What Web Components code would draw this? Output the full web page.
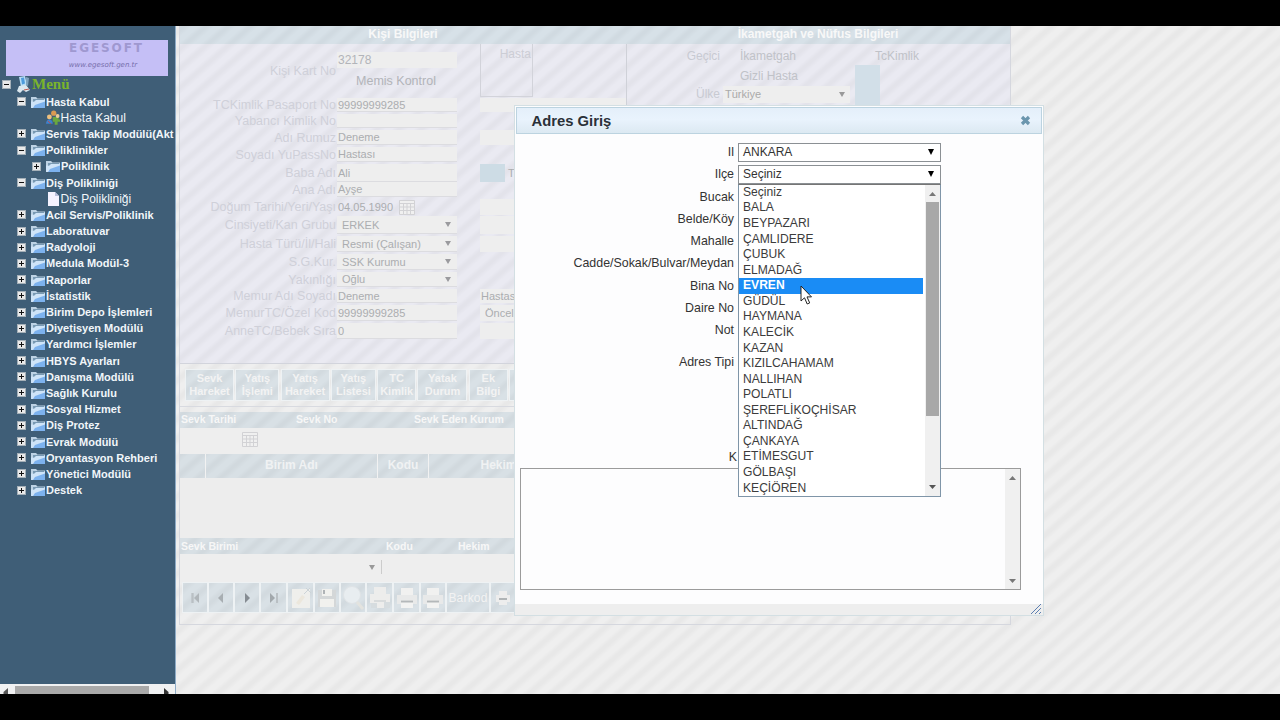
<!DOCTYPE html>
<html lang="tr">
<head>
<meta charset="utf-8">
<title>Adres Giriş</title>
<style>
  body {
    margin: 0;
    width: 1280px;
    height: 720px;
    overflow: hidden;
    background: #000;
    font-family: "Liberation Sans", Arial, sans-serif;
    --stripes: repeating-linear-gradient(139deg, rgba(0,0,0,0) 0 4px, rgba(0,0,0,.03) 8px 10px, rgba(0,0,0,0) 14.6px);
  }
</style>
</head>
<body>
<hbys-app></hbys-app>

<script>
function define(name, html, setup) {
  const template = document.createElement('template');
  template.innerHTML = html;

  customElements.define(name, class extends HTMLElement {
    connectedCallback() {
      if (this.shadowRoot) return;
      const root = this.attachShadow({ mode: 'open' });
      root.appendChild(template.content.cloneNode(true));
      if (setup) setup(this, root);
    }
  });
}

const icons = {
  folder: `<svg width="16" height="14" viewBox="0 0 16 14"><path d="M1 2h5l1.500 1.500H15V13H1z" fill="#bdd2e4"/><path d="M3 4h11v3H3z" fill="#7899b3"/><path d="M1 13V6.500l3 .2L6 5h9v8z" fill="#cfe4f8"/><path d="M5 10l10-3.500V13H3z" fill="#7db2ee"/></svg>`,
  page: `<svg width="14" height="14" viewBox="0 0 14 14"><path d="M2 0h7l4 4v10H2z" fill="#f4f2ff"/><path d="M9 0v4h4z" fill="#b9bedb"/></svg>`,
  people: `<svg width="15" height="15" viewBox="0 0 15 15"><circle cx="8" cy="3" r="2.700" fill="#d99a52"/><circle cx="3.500" cy="7" r="2.500" fill="#eec07e"/><path d="M0 14c0-6 7-6 7 0z" fill="#3c82cf"/><path d="M7 7h6v2.500h1.500V12H12v3H9v-3H7z" fill="#69a83f"/><circle cx="12" cy="6" r="2" fill="#e9cb9a"/><path d="M2 11l3 3" stroke="#d04a3a"/></svg>`,
  root: `<svg width="14" height="17" viewBox="0 0 14 17"><path d="M2 1l6-1 2 9-6 2z" fill="#b8ddf5"/><path d="M4 2l3-.5 1 6-3 1z" fill="#4e9bdc"/><path d="M9 1l3 1-1 8-2-1z" fill="#7fa3bd"/><path d="M0 15l2-5 7-1 4 5-4 2-3-2-3 3z" fill="#dce8ef"/><path d="M7 14l5-1" stroke="#c4574d"/></svg>`,
  calendar: `<svg width="17" height="16" viewBox="0 0 17 16"><path d="M.5 1.500h15v14H.5zM1 4.500h14M1 8h14M1 11.500h14M4.500 4v11M8 4v11M11.500 4v11" fill="#f0f0f0" stroke="#d2d2d5"/></svg>`,
  first: `<svg width="12" height="12"><path d="M3 1v10M4 1v10" stroke="#b0b6ba"/><path d="M10 1v10L5 6z" fill="#b0b6ba"/></svg>`,
  prev: `<svg width="12" height="12"><path d="M8 1v10L3 6z" fill="#a8aeb2"/></svg>`,
  next: `<svg width="12" height="12"><path d="M4 1v10l5-5z" fill="#868c92"/></svg>`,
  last: `<svg width="12" height="12"><path d="M2 1v10l5-5z" fill="#a2a8ac"/><path d="M9 1v10" stroke="#b0b6ba" stroke-width="1.500"/></svg>`,
  add: `<svg width="24" height="26"><path d="M3 4h18v19H3z" fill="#efefec"/><path d="M7 18l6-8 3 2-6 8z" fill="#ece7dc"/><path d="M17 3l5 5M15 9l6-6" stroke="#ccd3d7"/></svg>`,
  save: `<svg width="22" height="24"><path d="M2 4h18v17H2z" fill="#d4d7d8"/><path d="M6 3h10v7H6zM4 13h14v8H4z" fill="#f1f1ee"/><path d="M8 4v4" stroke="#afb3b6" stroke-width="2"/></svg>`,
  search: `<svg width="24" height="26"><circle cx="11" cy="10" r="8.500" fill="#e8edf0" stroke="#dfe3e6"/><path d="M16 17l6 7" stroke="#e3e3df" stroke-width="3"/></svg>`,
  print: `<svg width="22" height="24"><path d="M5 2h12v8H5z" fill="#f1f1f0"/><path d="M1 9h20v9H1z" fill="#e8e9e9"/><path d="M5 14h12v8H5z" fill="#f3f3f2"/><path d="M5 15.500h12" stroke="#b4b8ba" stroke-width="2"/></svg>`,
  smallPrint: `<svg width="16" height="16"><path d="M4 1h8v5H4zM1 5h14v7H1zM4 10h8v5H4z" fill="#ededed"/><path d="M4 9h8" stroke="#b0b4b6" stroke-width="2"/></svg>`,
  tools: `<svg width="24" height="26"><path d="M6 2h12v8H6zM2 9h20v9H2zM6 16h13v7H6z" fill="#ededec"/><path d="M3 18h6v5H3zM16 17h6v6h-6z" fill="#d6dcdf"/><path d="M6 16h12" stroke="#c3c9cc"/></svg>`
};

/* ---------- sidebar ---------- */

define('tree-item', `
<style>
  :host { display: flex; align-items: center; height: 16.2px; white-space: nowrap; color: #f1f6fa; font-size: 11px; font-weight: bold; }
  :host([level="1"]) { padding-left: 17px; }
  :host([level="2"]) { padding-left: 32px; }
  :host([leaf]) { padding-left: 46px; font-size: 12px; font-weight: normal; }
  :host([icon="root"]) { padding-left: 2px; color: #7bb42c; height: 17.500px; font: bold 15px "Liberation Serif", serif; }
  .box { box-sizing: border-box; width: 9px; height: 9px; margin-right: 3px; background: #e9e9e9; border: 1px solid #a5b0b8; position: relative; flex: none; }
  .box::before, .box.plus::after { content: ""; position: absolute; left: 1px; top: 3px; width: 5px; height: 1px; background: #111; }
  .box.plus::after { left: 3px; top: 1px; width: 1px; height: 5px; }
  :host([leaf]) .box { display: none; }
  .icon { display: flex; width: 17px; justify-content: center; flex: none; }
  :host([leaf]) .icon { width: 14.500px; }
  :host([icon="root"]) .icon { margin-left: 1px; }
</style>
<span class="box"></span><span class="icon"></span><slot></slot>
`, (el, root) => {
  root.querySelector('.icon').innerHTML = icons[el.getAttribute('icon') || 'folder'];
  if (!el.hasAttribute('open')) root.querySelector('.box').classList.add('plus');
});

define('side-menu', `
<style>
  :host { display: flex; flex-direction: column; width: 175px; flex: none; overflow: hidden; background: #3f5e77; border-right: 1px solid #8eabc6; }
  .logo { box-sizing: border-box; width: 162px; height: 36px; margin: 14px 0 0 6px; padding-left: 44px; background: #c5bff6; text-align: center; display: flex; flex-direction: column; }
  .logo b { font: bold 12px/17px "DejaVu Sans", sans-serif; letter-spacing: 1.900px; color: #9f98d0; padding-right: 5px; }
  .logo span { font: italic 7px/11px "DejaVu Sans", sans-serif; margin-top: 3px; padding-right: 12px; color: #766eab; }
  .tree { flex: 1; }
  .bar { display: flex; align-items: flex-start; height: 10px; background: #f0f1f2; }
  .bar i { flex: 1; height: 8px; margin-top: 2px; background: #a9a9a9; }
  .bar svg { margin-top: 4px; }
</style>
<div class="logo"><b>EGESOFT</b><span>www.egesoft.gen.tr</span></div>
<div class="tree">
  <tree-item icon="root" open>Menü</tree-item>
  <tree-item level="1" open>Hasta Kabul</tree-item>
  <tree-item leaf icon="people">Hasta Kabul</tree-item>
  <tree-item level="1">Servis Takip Modülü(Akt</tree-item>
  <tree-item level="1" open>Poliklinikler</tree-item>
  <tree-item level="2">Poliklinik</tree-item>
  <tree-item level="1" open>Diş Polikliniği</tree-item>
  <tree-item leaf icon="page">Diş Polikliniği</tree-item>
  <tree-item level="1">Acil Servis/Poliklinik</tree-item>
  <tree-item level="1">Laboratuvar</tree-item>
  <tree-item level="1">Radyoloji</tree-item>
  <tree-item level="1">Medula Modül-3</tree-item>
  <tree-item level="1">Raporlar</tree-item>
  <tree-item level="1">İstatistik</tree-item>
  <tree-item level="1">Birim Depo İşlemleri</tree-item>
  <tree-item level="1">Diyetisyen Modülü</tree-item>
  <tree-item level="1">Yardımcı İşlemler</tree-item>
  <tree-item level="1">HBYS Ayarları</tree-item>
  <tree-item level="1">Danışma Modülü</tree-item>
  <tree-item level="1">Sağlık Kurulu</tree-item>
  <tree-item level="1">Sosyal Hizmet</tree-item>
  <tree-item level="1">Diş Protez</tree-item>
  <tree-item level="1">Evrak Modülü</tree-item>
  <tree-item level="1">Oryantasyon Rehberi</tree-item>
  <tree-item level="1">Yönetici Modülü</tree-item>
  <tree-item level="1">Destek</tree-item>
</div>
<div class="bar"><svg width="15" height="6"><path d="M8 0v6H3.500V4z" fill="#555"/></svg><i></i><svg width="26" height="6"><path d="M15 0v6h4.500V4z" fill="#333"/></svg></div>
`);

/* ---------- patient card behind the dialog ---------- */

define('card-row', `
<style>
  :host { display: grid; grid-template-columns: 157px 120px 23px 1fr; align-items: stretch; height: var(--h, 17px); font-size: 11px; color: #abadb0; white-space: nowrap; }
  .label { align-self: center; justify-self: end; padding-right: 1px; font-size: 12.5px; color: #cfd0d9; }
  .field { display: flex; align-items: center; margin: 1px 0; padding-left: 1px; background: #eee; border-bottom: 1px solid #dcdce0; }
  :host([select]) .field { padding-left: 5px; }
  :host([select]) .field::after { content: ""; margin-left: auto; margin-right: 6px; border: 3.500px solid transparent; border-width: 5px 3.500px 0; border-top-color: #9a9a9e; }
  .third { grid-column: 4; display: flex; align-items: center; margin: 1px 0; }
  :host([third]) .third { background: #eee; }
  .cal { display: none; margin-left: 6px; }
  :host([calendar]) .field { background: none; border: 0; }
  :host([calendar]) .cal { display: flex; }
</style>
<span class="label"></span><span class="field"><slot></slot><span class="cal">${icons.calendar}</span></span><span class="third"><slot name="third"></slot></span>
`, (el, root) => {
  root.querySelector('.label').textContent = el.getAttribute('label');
  el.style.setProperty('--h', el.getAttribute('h') + 'px');
});

define('patient-form', `
<style>
  :host { display: grid; grid-template-columns: 446px 1fr; grid-template-rows: 18px 319px; background: var(--stripes) fixed, #eaeaf2; border-bottom: 1px solid #d2d4dc; }
  h2 { margin: 0; font-size: 12px; line-height: 16px; text-align: center; color: #f8f8f8; background: var(--stripes) fixed, #d7e1e8; }
  .right { border-left: 1px solid #cfd1d8; display: grid; grid-template-columns: 113px 118px 1fr; grid-template-rows: 23px 17px 20px; font-size: 12px; color: #c0c2c8; align-items: center; box-sizing: border-box; }
  .top { display: grid; grid-template-columns: 157px 120px 23px 53px; height: 53px; color: #b2b4b9; font-size: 12.5px; }
  .top label { align-self: center; justify-self: end; padding-right: 1px; color: #cfd0d9; }
  .top p { margin: 8px 0 0; padding-left: 1px; height: 16px; line-height: 16px; background: #eee; font-size: 12px; }
  .top p + p { margin-top: 5px; padding: 0 2px 0 0; text-align: center; background: none; font-size: 12.5px; }
  .hasta { grid-column: 4; border: 1px solid #d2d3da; border-top: 0; text-align: right; color: #cccdd5; font-size: 12px; line-height: 20px; padding-right: 1px; box-sizing: border-box; }
  .sq { width: 25px; height: 18px; background: #cddce5; margin-right: 3px; }
  .ulke { display: flex; justify-content: space-between; align-items: center; width: 127px; box-sizing: border-box; margin-left: -17px; background: #eee; color: #aaa; font-size: 11px; height: 17px; padding: 0 5px 0 2px; }
  .ulke i { border: 3.500px solid transparent; border-width: 5px 3.500px 0; border-top-color: #999; }
  .right > .r { justify-self: end; padding-right: 20px; color: #c8cad2; }
  .blue { width: 25px; height: 42px; background: #d2dfe8; grid-row: 2 / 4; grid-column: 3; align-self: start; margin: -2px 0 0 -3px; }
</style>
<h2>Kişi Bilgileri</h2><h2>İkametgah ve Nüfus Bilgileri</h2>
<div>
  <div class="top"><label>Kişi Kart No</label><div><p>32178</p><p>Memis Kontrol</p></div><div class="hasta">Hasta</div></div>
  <card-row label="TCKimlik Pasaport No" h="16" third>99999999285</card-row>
  <card-row label="Yabancı Kimlik No" h="16"></card-row>
  <card-row label="Adı Rumuz" h="17" third>Deneme</card-row>
  <card-row label="Soyadı YuPassNo" h="17">Hastası</card-row>
  <card-row label="Baba Adı" h="18">Ali<i class="sq" slot="third"></i><span slot="third">T</span></card-row>
  <card-row label="Ana Adı" h="17">Ayşe</card-row>
  <card-row label="Doğum Tarihi/Yeri/Yaşı" h="17" calendar third>04.05.1990</card-row>
  <card-row label="Cinsiyeti/Kan Grubu" h="20" select third>ERKEK</card-row>
  <card-row label="Hasta Türü/İl/Hali" h="18" select third>Resmi (Çalışan)</card-row>
  <card-row label="S.G.Kur." h="18" select>SSK Kurumu</card-row>
  <card-row label="Yakınlığı" h="17" select>Oğlu</card-row>
  <card-row label="Memur Adı Soyadı" h="16" third>Deneme<span slot="third" style="margin-left:1px">Hastası</span></card-row>
  <card-row label="MemurTC/Özel Kod" h="18" third>99999999285<span slot="third" style="margin-left:5px">Öncelik</span></card-row>
  <card-row label="AnneTC/Bebek Sıra" h="18" third>0</card-row>
</div>
<div class="right">
  <span class="r">Geçici</span><span>İkametgah</span><span style="padding-left:17px">TcKimlik</span>
  <span></span><span>Gizli Hasta</span><i class="blue"></i>
  <span class="r">Ülke</span><div class="ulke"><span>Türkiye</span><i></i></div>
</div>
`);

define('tool-button', `
<style>
  :host { display: flex; align-items: center; justify-content: center; box-sizing: border-box; background: var(--stripes) fixed, #d9e1e6; border: 1px solid #eef2f4; color: #f3f3f3; overflow: hidden; white-space: nowrap; }
</style>
<slot></slot>
`, el => {
  const icon = el.getAttribute('icon');
  if (icon) el.insertAdjacentHTML('afterbegin', icons[icon]);
  el.style.width = el.getAttribute('w') + 'px';
});

define('patient-card', `
<style>
  :host { display: flex; flex-direction: column; box-sizing: border-box; width: 832px; height: 599px; margin-left: 3px; border: 1px solid #d5d7de; border-top: 0; }
  .tabs { display: flex; gap: 1.300px; height: 32px; padding: 5px 0 5px 5px; border-bottom: 1px solid #d8dae0; }
  .tabs tool-button { font: bold 11px/13px "Liberation Sans", sans-serif; text-align: center; white-space: pre; flex: none; }
  .band { display: grid; height: 15px; line-height: 15px; font-size: 10.500px; font-weight: bold; color: #f7f7f7; background: var(--stripes) fixed, #d8e0e5; }
  .b1 { grid-template-columns: 115px 118px 1fr; margin-top: 5px; padding-left: 1px; height: 16px; }
  .b2 { grid-template-columns: 205px 72px 1fr; height: 16px; line-height: 16px; padding-left: 1px; }
  .row { display: flex; align-items: center; background: #eee; box-sizing: border-box; }
  .head { display: flex; height: 24px; line-height: 22px; font-size: 12px; text-align: center; font-weight: bold; color: #f0f2f3; background: var(--stripes) fixed, #d8e0e5; }
  .head span { box-sizing: border-box; border-right: 1px solid #f2f2f2; }
  .list { height: 60px; background: #ededed; }
  .arrow { border: 3.500px solid transparent; border-width: 5px 3.500px 0; border-top-color: #999; margin: 0 6px 0 189px; }
  .line { width: 1px; height: 14px; background: #ccc; }
  .bar { display: flex; height: 31px; margin-left: 2px; }
  .bar tool-button { font-weight: normal; font-size: 12px; letter-spacing: .2px; flex: none; }
</style>
<patient-form></patient-form>
<div class="tabs">
  <tool-button w="49">Sevk
Hareket</tool-button><tool-button w="44">Yatış
İşlemi</tool-button><tool-button w="49">Yatış
Hareket</tool-button><tool-button w="45">Yatış
Listesi</tool-button><tool-button w="39">TC
Kimlik</tool-button><tool-button w="50">Yatak
Durum</tool-button><tool-button w="39">Ek
Bilgi</tool-button><tool-button w="50"></tool-button>
</div>
<div class="band b1"><span>Sevk Tarihi</span><span>Sevk No</span><span>Sevk Eden Kurum</span></div>
<div class="row" style="height:26px;padding:0 0 4px 62px">${icons.calendar}</div>
<div class="head"><span style="width:26px"></span><span style="width:172px">Birim Adı</span><span style="width:51px">Kodu</span><span style="width:140px">Hekim</span></div>
<div class="list"></div>
<div class="band b2"><span>Sevk Birimi</span><span>Kodu</span><span>Hekim</span></div>
<div class="row" style="height:28px;padding-bottom:2px"><i class="arrow"></i><i class="line"></i></div>
<div class="bar">
  <tool-button w="26" icon="first"></tool-button><tool-button w="26" icon="prev"></tool-button><tool-button w="26" icon="next"></tool-button><tool-button w="27" icon="last"></tool-button><tool-button w="27" icon="add"></tool-button><tool-button w="26" icon="save"></tool-button><tool-button w="26" icon="search"></tool-button><tool-button w="27" icon="tools"></tool-button><tool-button w="27" icon="print"></tool-button><tool-button w="26" icon="print"></tool-button><tool-button w="44">Barkod</tool-button><tool-button w="26" icon="smallPrint"></tool-button>
</div>
`);

/* ---------- dialog ---------- */

define('select-box', `
<style>
  :host { display: flex; align-items: center; justify-content: space-between; box-sizing: border-box; width: 203px; height: 19px; padding: 0 6px 0 4px; border: 1px solid #8b9094; background: #fff; font-size: 12px; color: #333; position: relative; }
  i { border: 3.500px solid transparent; border-width: 6px 3.500px 0; border-top-color: #000; }
</style>
<slot></slot><i></i><slot name="list"></slot>
`);

define('option-list', `
<style>
  :host { position: absolute; left: -1px; top: 18px; z-index: 2; box-sizing: border-box; width: 203px; height: 313px; display: flex; background: #fff; border: 1px solid #7f95a8; border-top-color: #757575; color: #3c3c3c; font-size: 12.100px; }
  .items { flex: 1; padding-right: 2px; }
  .bar { width: 15px; background: #f0f0f0; display: flex; flex-direction: column; align-items: center; }
  .bar b { width: 13px; height: 214px; background: #a8a8a8; }
  .bar svg { flex: none; }
  .bar svg:last-child { margin-top: auto; }
  ::slotted(div) { height: 15.570px; line-height: 14.500px; padding-left: 4px; white-space: nowrap; }
  ::slotted(.on) { background: #1a8cf5; color: #fff; font-weight: bold; }
</style>
<div class="items"><slot></slot></div>
<div class="bar"><svg width="15" height="17"><path d="M4 11h7L7.500 7z" fill="#777"/></svg><b></b><svg width="15" height="17"><path d="M4 6h7L7.500 10z" fill="#555"/></svg></div>
`);

define('field-row', `
<style>
  :host { display: grid; grid-template-columns: 219px 203px; column-gap: 4px; align-items: center; height: 22.270px; font-size: 12.400px; color: #333; }
  span { text-align: right; white-space: nowrap; }
</style>
<span></span><slot></slot>
`, (el, root) => root.querySelector('span').textContent = el.getAttribute('label'));

define('address-dialog', `
<style>
  :host { position: absolute; left: 514px; top: 79px; box-sizing: border-box; width: 530px; height: 511px; display: flex; flex-direction: column; background: #fdfdfe; border: 1px solid #d3dfe3; }
  header { display: flex; align-items: center; justify-content: space-between; height: 25px; margin: 1px 1px 0; padding: 0 10px 0 14.500px; border: 1px solid #bcd3e0; background: linear-gradient(#e4effa, #e9f3fd 45%, #dce9f2); font-size: 14.800px; font-weight: bold; color: #2a3038; }
  .body { flex: 1; padding-top: 7px; }
  .text { display: flex; justify-content: flex-end; box-sizing: border-box; width: 501px; height: 122px; margin-left: 5px; border: 1px solid #9b9b9b; background: #fdfdfe; }
  .text div { width: 15px; background: #f0f0f0; display: flex; flex-direction: column; justify-content: space-between; }
  footer { height: 11px; background: #eee; display: flex; justify-content: flex-end; align-items: flex-end; }
  footer svg { flex: none; }
</style>
<header><span>Adres Giriş</span><svg width="11" height="11"><path d="M2 2l7 7M9 2L2 9" stroke="#6b96ae" stroke-width="3.200"/></svg></header>
<div class="body">
  <field-row label="Il"><select-box>ANKARA</select-box></field-row>
  <field-row label="Ilçe"><select-box>Seçiniz<option-list slot="list"></option-list></select-box></field-row>
  <field-row label="Bucak"></field-row>
  <field-row label="Belde/Köy"></field-row>
  <field-row label="Mahalle"></field-row>
  <field-row label="Cadde/Sokak/Bulvar/Meydan"></field-row>
  <field-row label="Bina No"></field-row>
  <field-row label="Daire No"></field-row>
  <field-row label="Not"></field-row>
  <field-row label="Adres Tipi" style="margin-top:9px"></field-row>
  <field-row label="K" style="margin:73px 0 0 3px"></field-row>
  <div class="text"><div><svg width="15" height="17"><path d="M4 11h7L7.500 7z" fill="#777"/></svg><svg width="15" height="17"><path d="M4 7h7L7.500 11z" fill="#777"/></svg></div></div>
</div>
<footer><svg width="14" height="13"><path d="M2 12L12 2M6 12l6-6M10 12l2-2" stroke="#5d7fb0" fill="none"/></svg></footer>
`, (el, root) => {
  const names = ['Seçiniz', 'BALA', 'BEYPAZARI', 'ÇAMLIDERE', 'ÇUBUK', 'ELMADAĞ', 'EVREN', 'GÜDÜL', 'HAYMANA', 'KALECİK',
    'KAZAN', 'KIZILCAHAMAM', 'NALLIHAN', 'POLATLI', 'ŞEREFLİKOÇHİSAR', 'ALTINDAĞ', 'ÇANKAYA', 'ETİMESGUT', 'GÖLBAŞI', 'KEÇİÖREN'];
  root.querySelector('option-list').innerHTML = names.map(n => `<div${n === 'EVREN' ? ' class="on"' : ''}>${n}</div>`).join('');
});

define('mouse-pointer', `
<style>
  :host { position: absolute; left: 800px; top: 259px; z-index: 5; }
  svg { display: block; }
</style>
<svg width="13" height="21" viewBox="0 0 13 21"><path d="M1 1v15l3.500-3.200 2.700 6.200 2.500-1.100-2.700-6H11.500z" fill="#fff" stroke="#222"/></svg>
`);

define('hbys-app', `
<style>
  :host { display: flex; position: relative; height: 668px; margin-top: 26px; overflow: hidden; background: #eee; }
  main { flex: 1; min-width: 0; background: var(--stripes) fixed, #efefef; }
</style>
<side-menu></side-menu>
<main><patient-card></patient-card></main>
<address-dialog></address-dialog>
<mouse-pointer></mouse-pointer>
`);
</script>
</body>
</html>
